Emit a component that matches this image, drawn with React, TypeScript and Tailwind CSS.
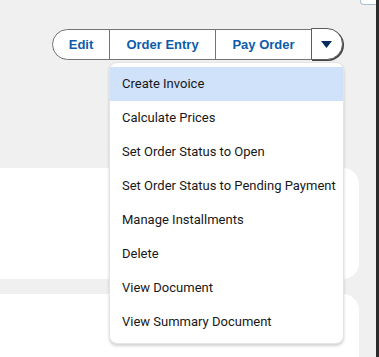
import React from "react";

const items = [
  "Create Invoice",
  "Calculate Prices",
  "Set Order Status to Open",
  "Set Order Status to Pending Payment",
  "Manage Installments",
  "Delete",
  "View Document",
  "View Summary Document",
];

export default function App() {
  return (
    <div
      className="relative flex w-[379px] h-[357px] overflow-hidden bg-[#f0f0f0]"
      style={{ fontFamily: '"Liberation Sans", Arial, sans-serif' }}
    >
      <div className="flex flex-1 flex-col">
        <div className="flex h-[168px] justify-end pr-[33px] pt-[29px]">
          <div className="flex h-[31px] items-stretch">
            <button className="flex w-[58px] items-center justify-center rounded-l-full border border-[#747474] bg-white text-[13px] font-bold text-[#0b5cab]">
              Edit
            </button>
            <button className="-ml-px flex w-[107px] items-center justify-center border border-[#747474] bg-white text-[13px] font-bold text-[#0b5cab]">
              Order Entry
            </button>
            <button className="-ml-px flex w-[97px] items-center justify-center border border-[#747474] bg-white text-[13px] font-bold text-[#0b5cab]">
              Pay Order
            </button>
            <button className="-ml-px -mt-px flex h-[32px] w-[32px] items-center justify-center rounded-r-full border border-[#5c5c5c] bg-white pr-[2px] shadow-[1px_1px_0_#444]">
              <svg width="11" height="7" viewBox="0 0 11 7">
                <path d="M0 0 H11 L5.5 7 Z" fill="#032d60" />
              </svg>
            </button>
          </div>
        </div>
        <div className="h-[111px] w-[359px] rounded-r-2xl bg-white" />
        <div className="mt-[15px] flex-1 w-[359px] rounded-tr-2xl bg-white" />
      </div>
      <div className="w-[3px] bg-[#2b2b2b]" />

      <div className="absolute right-[3px] top-0 h-[5px] w-[16px] rounded-bl-[4px] border-b border-l border-[#a9c1cf] bg-white" />

      <div
        className="absolute left-[109px] top-[62px] w-[235px] rounded-lg border border-[#e4e4e4] bg-white pb-[4px] pt-[4px] shadow-[0_2px_3px_rgba(0,0,0,0.18)]"
        style={{ fontFamily: 'Roboto, "Liberation Sans", sans-serif' }}
      >
        {items.map((t, i) => (
          <div
            key={t}
            className={`flex h-[34px] items-center whitespace-nowrap pl-[12px] text-[13px] text-[#181818] ${
              i === 0 ? "bg-[#cfe2fa]" : ""
            }`}
          >
            {t}
          </div>
        ))}
      </div>
    </div>
  );
}
